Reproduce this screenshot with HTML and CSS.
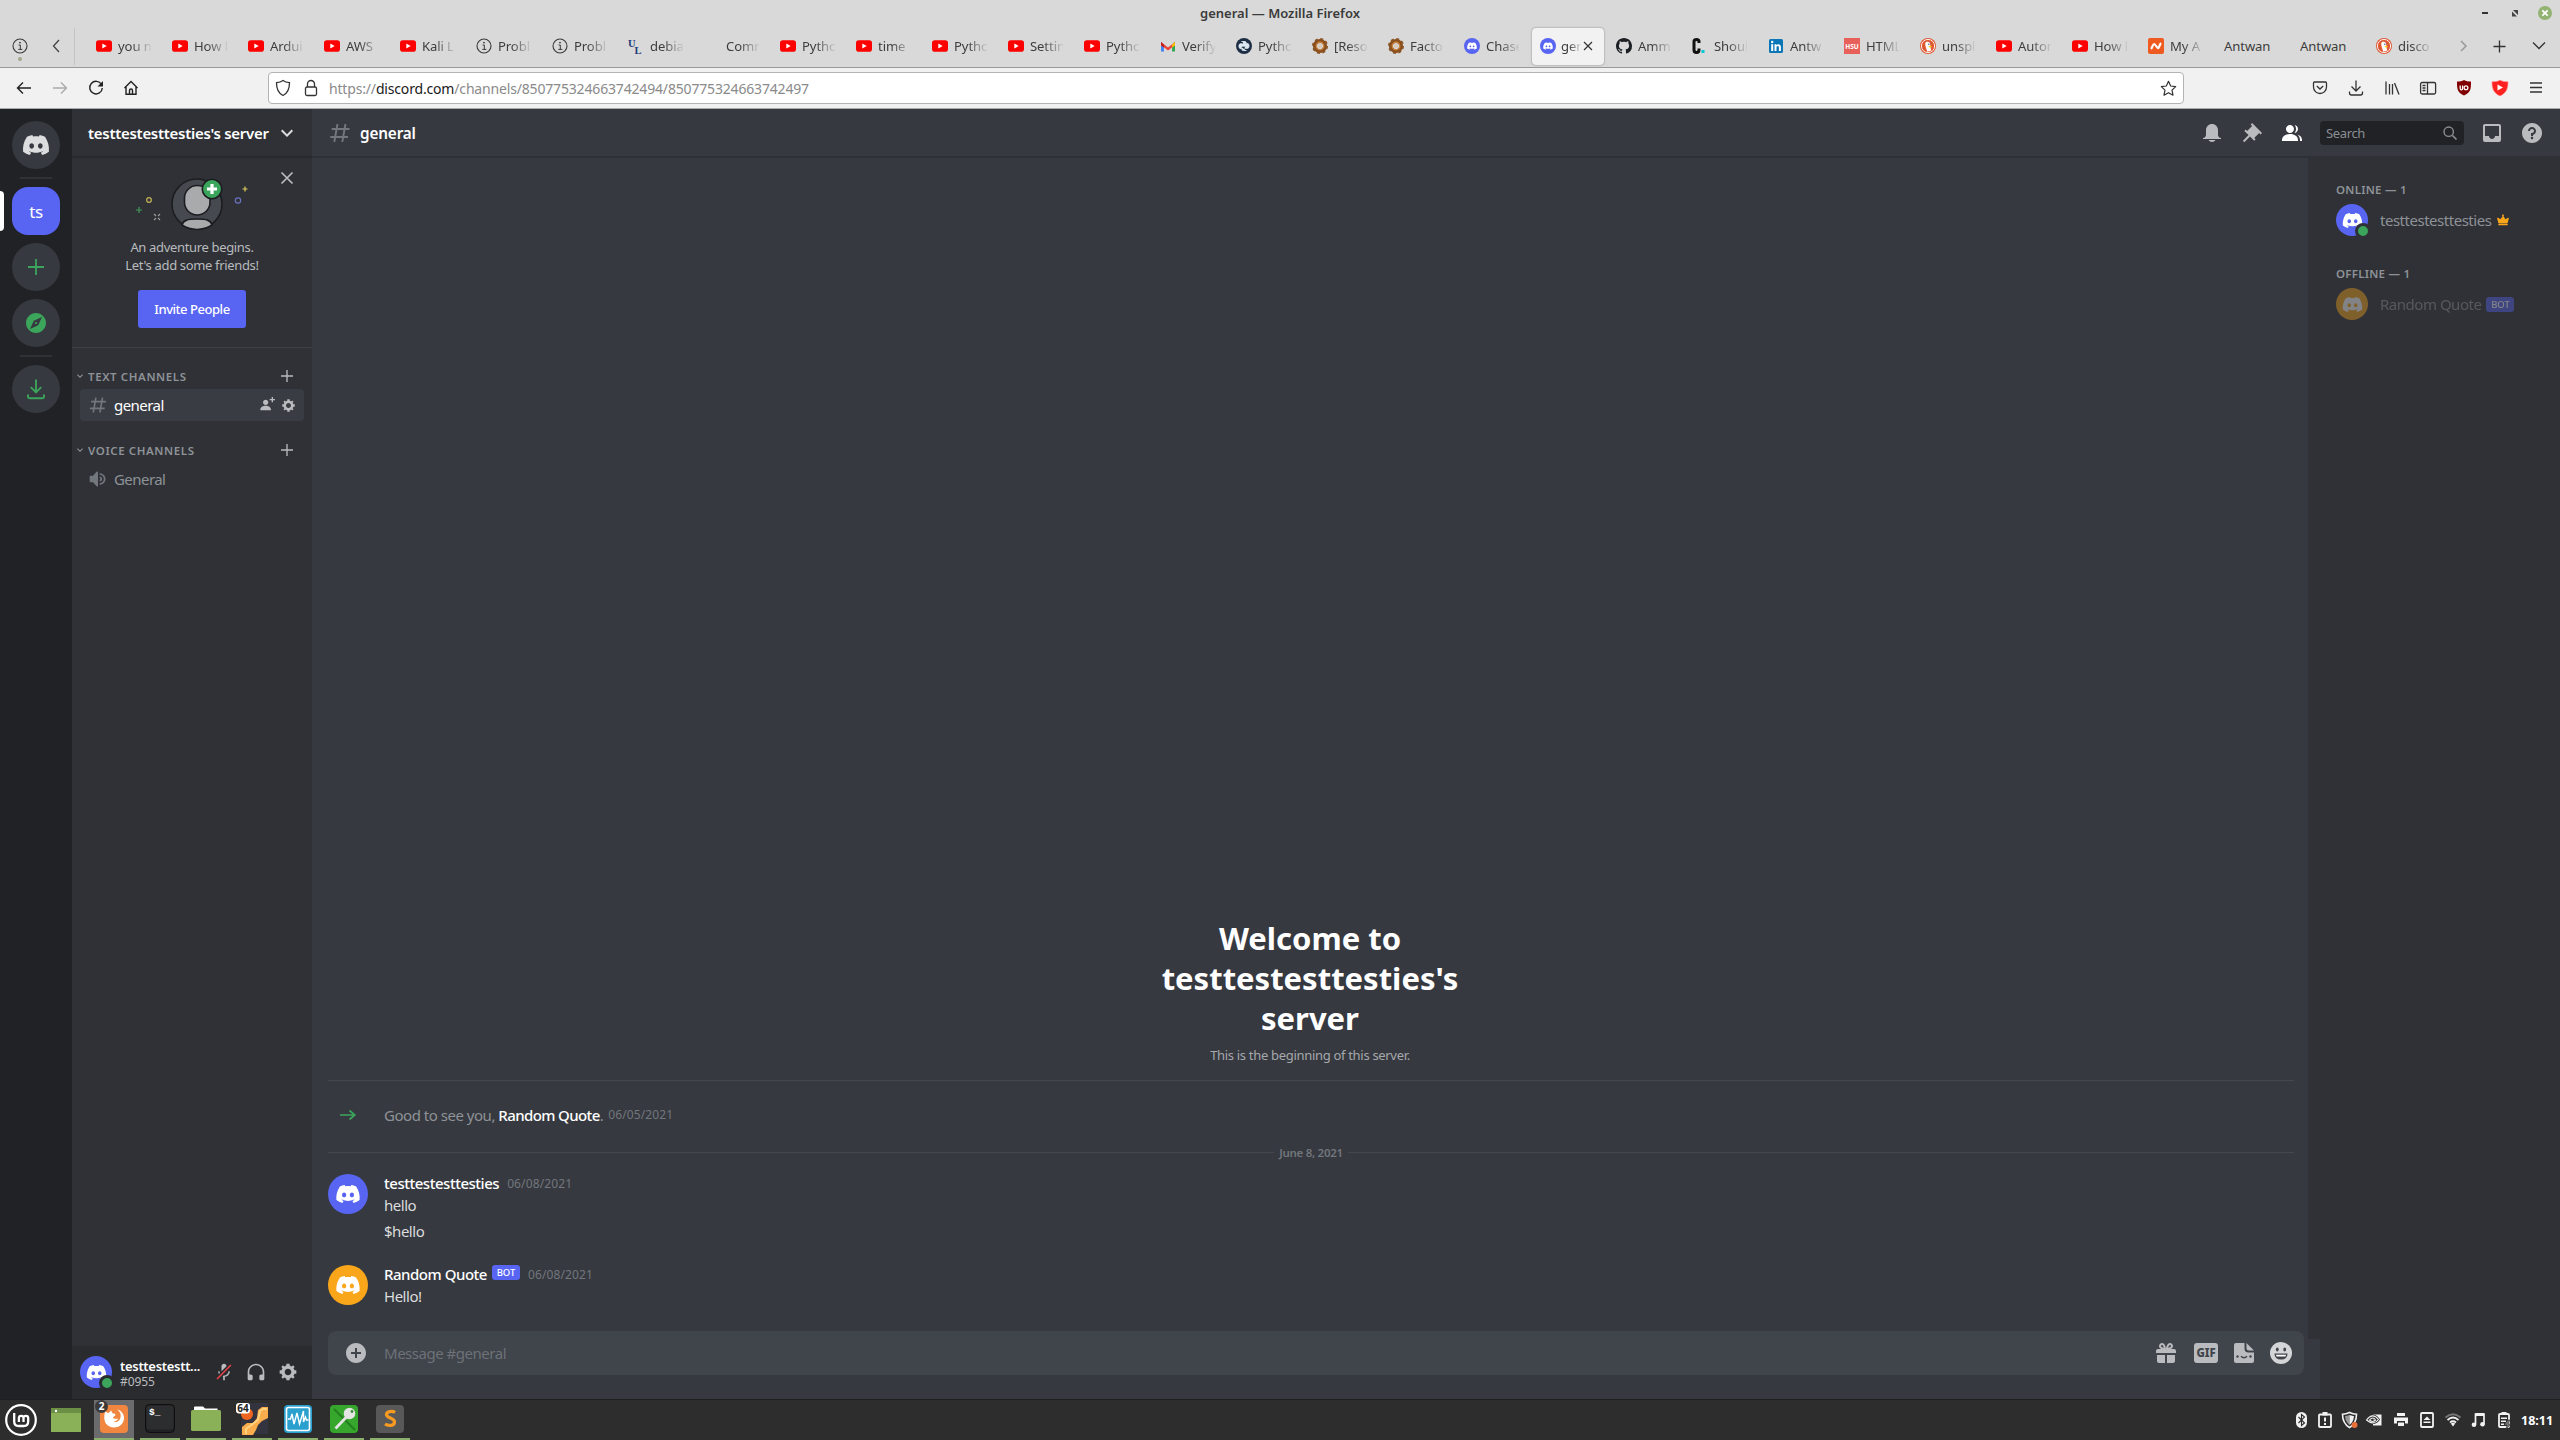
FILE: index.html
```html
<!DOCTYPE html>
<html lang="en">
<head>
<meta charset="utf-8">
<title>general</title>
<link rel="stylesheet" href="styles.css">
</head>
<body>
<svg class="sprite" aria-hidden="true">
  <symbol id="yt" viewBox="0 0 16 16"><rect y="2.3" width="16" height="11.4" rx="2.8" fill="#f00"/><path d="M6.3 5.5v5l4.4-2.5z" fill="#fff"/></symbol>
  <symbol id="info" viewBox="0 0 16 16"><circle cx="8" cy="8" r="7" fill="none" stroke="#3a3a3a" stroke-width="1.1"/><path d="M6.6 7H8.3v4.3M6.3 11.4h4" fill="none" stroke="#3a3a3a"/><circle cx="8" cy="4.6" r=".9" fill="#3a3a3a"/></symbol>
  <symbol id="disc" viewBox="0 0 28 20"><path fill="currentColor" fill-rule="evenodd" d="M23.0212 1.67671C21.3107 0.879656 19.5079 0.318797 17.6584 0C17.4062 0.461742 17.1749 0.934541 16.9708 1.4184C15.003 1.12145 12.9974 1.12145 11.0283 1.4184C10.819 0.934541 10.589 0.461744 10.3368 0.00546311C8.48074 0.324393 6.67795 0.885118 4.96746 1.68231C1.56727 6.77853 0.649666 11.7538 1.11108 16.652C3.10102 18.1418 5.3262 19.2743 7.69177 20C8.22338 19.2743 8.69519 18.4993 9.09812 17.691C8.32996 17.3997 7.58522 17.0424 6.87684 16.6135C7.06531 16.4762 7.24726 16.3387 7.42403 16.1847C11.5911 18.1749 16.408 18.1749 20.5763 16.1847C20.7531 16.3332 20.9351 16.4762 21.1171 16.6135C20.41 17.0369 19.6639 17.3997 18.897 17.691C19.3052 18.4993 19.7718 19.2689 20.3021 19.9945C22.6677 19.2689 24.8929 18.1364 26.8828 16.652V16.6465C27.4291 10.9619 25.9476 6.03128 23.0212 1.67671ZM9.68041 13.6383C8.39754 13.6383 7.34085 12.4453 7.34085 10.994C7.34085 9.54272 8.37155 8.34973 9.68041 8.34973C10.9893 8.34973 12.0395 9.54272 12.0187 10.994C12.0187 12.4453 10.9828 13.6383 9.68041 13.6383ZM18.3161 13.6383C17.0332 13.6383 15.9765 12.4453 15.9765 10.994C15.9765 9.54272 17.0072 8.34973 18.3161 8.34973C19.6249 8.34973 20.6751 9.54272 20.6543 10.994C20.6543 12.4453 19.6184 13.6383 18.3161 13.6383Z"/></symbol>
  <symbol id="discfav" viewBox="0 0 16 16"><circle cx="8" cy="8" r="8" fill="#5865f2"/><svg x="2.8" y="4.3" width="10.4" height="7.4" viewBox="0 0 28 20" color="#fff"><use href="#disc"/></svg></symbol>
  <symbol id="factorio" viewBox="0 0 16 16"><circle cx="8" cy="8" r="5.1" fill="none" stroke="#8a4f1c" stroke-width="4"/><circle cx="8" cy="8" r="7.1" fill="none" stroke="#8a5526" stroke-width="1.8" stroke-dasharray="3 2.58"/><circle cx="8" cy="8" r="3.8" fill="none" stroke="#d08a42" stroke-width="1.2"/><circle cx="8" cy="8" r="2" fill="#d9c9b5"/></symbol>
  <symbol id="ddg" viewBox="0 0 16 16"><circle cx="8" cy="8" r="8" fill="#de5833"/><circle cx="8" cy="8" r="6.6" fill="none" stroke="#fff" stroke-width=".9"/><path d="M5.2 5.2C6 3.4 9 3.3 10 5.4c.5 1.2.2 2 .3 3l.9 4.2-3.8 1.2C6.5 11 5 8 5.2 5.2z" fill="#fff"/><path d="M8.5 8h3.2l-.4 1.3H8.800z" fill="#fdd20a"/><circle cx="8.9" cy="6.3" r=".7" fill="#2d4f8e"/></symbol>
  <symbol id="hash" viewBox="0 0 24 24"><path fill="currentColor" fill-rule="evenodd" d="M5.88657 21C5.57547 21 5.3399 20.7189 5.39427 20.4126L6.00001 17H2.59511C2.28449 17 2.04905 16.7198 2.10259 16.4138L2.27759 15.4138C2.31946 15.1746 2.52722 15 2.77011 15H6.35001L7.41001 9H4.00511C3.69449 9 3.45905 8.71977 3.51259 8.41381L3.68759 7.41381C3.72946 7.17456 3.93722 7 4.18011 7H7.76001L8.39677 3.41262C8.43914 3.17391 8.64664 3 8.88907 3H9.87344C10.1845 3 10.4201 3.28107 10.3657 3.58738L9.76001 7H15.76L16.3968 3.41262C16.4391 3.17391 16.6466 3 16.8891 3H17.8734C18.1845 3 18.4201 3.28107 18.3657 3.58738L17.76 7H21.1649C21.4755 7 21.711 7.28023 21.6574 7.58619L21.4824 8.58619C21.4406 8.82544 21.2328 9 20.9899 9H17.41L16.35 15H19.7549C20.0655 15 20.301 15.2802 20.2474 15.5862L20.0724 16.5862C20.0306 16.8254 19.8228 17 19.5799 17H16L15.3632 20.5874C15.3209 20.8261 15.1134 21 14.8709 21H13.8866C13.5755 21 13.3399 20.7189 13.3943 20.4126L14 17H8.00001L7.36325 20.5874C7.32088 20.8261 7.11337 21 6.87094 21H5.88657ZM9.41045 9L8.35045 15H14.3504L15.4104 9H9.41045Z"/></symbol>
  <symbol id="plus" viewBox="0 0 24 24"><path fill="currentColor" d="M20 11.1111H12.8889V4H11.1111V11.1111H4V12.8889H11.1111V20H12.8889V12.8889H20V11.1111Z"/></symbol>
  <symbol id="gear" viewBox="0 0 24 24"><path fill="currentColor" fill-rule="evenodd" d="M19.738 10H22V14H19.739C19.498 14.931 19.1 15.798 18.565 16.564L20 18L18 20L16.565 18.564C15.797 19.099 14.932 19.498 14 19.738V22H10V19.738C9.069 19.498 8.203 19.099 7.436 18.564L6 20L4 18L5.436 16.564C4.901 15.799 4.502 14.932 4.262 14H2V10H4.262C4.502 9.068 4.9 8.202 5.436 7.436L4 6L6 4L7.436 5.436C8.202 4.9 9.068 4.502 10 4.262V2H14V4.261C14.932 4.502 15.797 4.9 16.565 5.435L18 3.999L20 5.999L18.564 7.436C19.099 8.202 19.498 9.069 19.738 10ZM12 16C14.2091 16 16 14.2091 16 12C16 9.79086 14.2091 8 12 8C9.79086 8 8 9.79086 8 12C8 14.2091 9.79086 16 12 16Z"/></symbol>
  <symbol id="chev" viewBox="0 0 24 24"><path fill="currentColor" d="M16.59 8.59004L12 13.17L7.41 8.59004L6 10L12 16L18 10L16.59 8.59004Z"/></symbol>
</svg>

<header class="titlebar">
  <span class="window-title">general — Mozilla Firefox</span>
  <svg class="window-controls" width="76" height="16" viewBox="0 0 76 16"><path d="M2 8h6" stroke="#333" stroke-width="2"/><path d="M33 5h5v5zM32 6.500v5h5z" fill="#444"/><circle cx="65" cy="8" r="7" fill="#92b372"/><path d="m62.300 5.300 5.400 5.400m0-5.400-5.400 5.400" stroke="#fff" stroke-width="1.800"/></svg>
</header>

<nav class="tabs">
  <div class="tabs-pinned"><svg width="16" height="16"><use href="#info"/></svg><i></i></div>
  <svg class="tabs-prev" width="16" height="16" viewBox="0 0 16 16"><path d="M11 2 5.500 8l5.500 6" fill="none" stroke="#444" stroke-width="1.300"/></svg>
  <div class="tab-list">
    <div class="tab"><svg><use href="#yt"/></svg><span>you n</span></div>
    <div class="tab"><svg><use href="#yt"/></svg><span>How l</span></div>
    <div class="tab"><svg><use href="#yt"/></svg><span>Ardui</span></div>
    <div class="tab"><svg><use href="#yt"/></svg><span>AWS</span></div>
    <div class="tab"><svg><use href="#yt"/></svg><span>Kali L</span></div>
    <div class="tab"><svg><use href="#info"/></svg><span>Probl</span></div>
    <div class="tab"><svg><use href="#info"/></svg><span>Probl</span></div>
    <div class="tab"><svg viewBox="0 0 16 16"><text x="0" y="9" class="fav-serif">U</text><text x="6.500" y="15.500" class="fav-serif">L</text></svg><span>debia</span></div>
    <div class="tab"><svg></svg><span>Comm</span></div>
    <div class="tab"><svg><use href="#yt"/></svg><span>Pytho</span></div>
    <div class="tab"><svg><use href="#yt"/></svg><span>time</span></div>
    <div class="tab"><svg><use href="#yt"/></svg><span>Pytho</span></div>
    <div class="tab"><svg><use href="#yt"/></svg><span>Settin</span></div>
    <div class="tab"><svg><use href="#yt"/></svg><span>Pytho</span></div>
    <div class="tab"><svg viewBox="0 0 16 16"><path d="M1 3.500v10h3V7z" fill="#4285f4"/><path d="M15 3.500v10h-3V7z" fill="#34a853"/><path d="m1 4 7 5.500L15 4v3l-7 5.500L1 7z" fill="#ea4335"/><path d="M12 6.500 15 4v3.500l-3 2z" fill="#fbbc04"/><path d="M1 4l3 2.500v3l-3-2z" fill="#c5221f"/></svg><span>Verify</span></div>
    <div class="tab"><svg viewBox="0 0 16 16"><circle cx="8" cy="8" r="8" fill="#1e2f45"/><path d="M5.500 3.500h3.300q1.400 0 1.400 1.400v2.300q0 1-1 1H6.400q-1.200 0-1.200 1.500v.8H4.100C2.600 10.500 2.600 5.800 4.100 5.800h3.400M10.700 5.500h1.200c1.500 0 1.500 4.800 0 4.800H8.500M10.500 12.500H7.200q-1.400 0-1.400-1.400V9.600" fill="#dce9f2" stroke="#dce9f2" stroke-width=".9"/><circle cx="6.300" cy="4.700" r=".6" fill="#1e2f45"/><circle cx="9.600" cy="11.500" r=".6" fill="#1e2f45"/></svg><span>Pytho</span></div>
    <div class="tab"><svg><use href="#factorio"/></svg><span>[Reso</span></div>
    <div class="tab"><svg><use href="#factorio"/></svg><span>Facto</span></div>
    <div class="tab"><svg><use href="#discfav"/></svg><span>Chase</span></div>
    <div class="tab tab-active"><svg><use href="#discfav"/></svg><span>gen</span><svg class="tab-close" viewBox="0 0 16 16"><path d="m4 4 8 8m0-8-8 8" stroke="#333" stroke-width="1.200"/></svg></div>
    <div class="tab"><svg viewBox="0 0 16 16"><path fill="#1b1f23" d="M8 0C3.580 0 0 3.580 0 8c0 3.540 2.290 6.530 5.470 7.590.4.070.55-.17.55-.38 0-.19-.01-.82-.01-1.490-2.010.37-2.530-.49-2.690-.94-.09-.23-.48-.94-.82-1.130-.28-.15-.68-.52-.01-.53.63-.01 1.080.58 1.230.82.72 1.210 1.870.87 2.330.66.07-.52.28-.87.51-1.070-1.780-.2-3.640-.89-3.640-3.950 0-.87.31-1.590.82-2.150-.08-.2-.36-1.020.08-2.120 0 0 .67-.21 2.200.82.64-.18 1.320-.27 2-.27s1.360.09 2 .27c1.530-1.040 2.200-.82 2.200-.82.44 1.100.16 1.920.08 2.120.51.56.82 1.270.82 2.150 0 3.070-1.870 3.750-3.650 3.950.29.25.54.73.54 1.480 0 1.070-.01 1.930-.01 2.200 0 .21.15.46.55.38A8.010 8.010 0 0 0 16 8c0-4.420-3.580-8-8-8z"/></svg><span>Amm</span></div>
    <div class="tab"><svg viewBox="0 0 16 16"><path d="M7 5V3.500q0-2-2.500-2T2 3.500V12q0 2.500 2.500 2.500T7 12v-1.500" fill="none" stroke="#111" stroke-width="3"/><rect x="9.500" y="12" width="3" height="3" fill="#00c8d7"/></svg><span>Shoul</span></div>
    <div class="tab"><svg viewBox="0 0 16 16"><rect x="1" y="1" width="14" height="14" rx="1.500" fill="#0a76b5"/><path d="M3.200 6.200h2V13h-2zM6.500 6.200h2v1c1-1.700 4.400-1.500 4.400 1.800v4h-2V9.500c0-2-2.400-2-2.400 0V13h-2z" fill="#fff"/><circle cx="4.200" cy="4" r="1.200" fill="#fff"/></svg><span>Antw</span></div>
    <div class="tab"><svg viewBox="0 0 16 16"><rect width="16" height="16" fill="#e8605a"/><text x="8" y="10.500" class="fav-hsu">HSU</text></svg><span>HTML</span></div>
    <div class="tab"><svg><use href="#ddg"/></svg><span>unspl</span></div>
    <div class="tab"><svg><use href="#yt"/></svg><span>Auton</span></div>
    <div class="tab"><svg><use href="#yt"/></svg><span>How l</span></div>
    <div class="tab"><svg viewBox="0 0 16 16"><rect width="16" height="16" rx="2" fill="#ee5a20"/><path d="M3 11c1-1 2-5 3.200-5S9 10.200 10 10.200 12 6 13 5" fill="none" stroke="#fff" stroke-width="2.200"/></svg><span>My A</span></div>
    <div class="tab tab-text"><span>Antwan</span></div>
    <div class="tab tab-text"><span>Antwan</span></div>
    <div class="tab"><svg><use href="#ddg"/></svg><span>disco</span></div>
  </div>
  <svg class="tabs-tools" width="100" height="16" viewBox="0 0 100 16"><path d="m6 3 5 5-5 5" fill="none" stroke="#999" stroke-width="1.500"/><path d="M44 2v12m-6-6h12" stroke="#333" stroke-width="1.300" transform="translate(.5 .5)"/><path d="m78 4.500 6 6 6-6" fill="none" stroke="#333" stroke-width="1.300"/></svg>
</nav>

<div class="toolbar">
  <svg class="nav-buttons" width="128" height="16" viewBox="0 0 128 16" fill="none" stroke="#222" stroke-width="1.400">
    <path d="M15 8H1.500M7 2.500 1.500 8 7 13.500"/>
    <path d="M37 8h13.500M45 2.500 50.500 8 45 13.500" stroke="#aaa"/>
    <path d="M85.500 4.500A6.300 6.300 0 1 0 86.300 8"/><path d="M87 1v5.500h-5.500z" fill="#222" stroke="none"/>
    <path d="M108.500 8 115 1.500 121.500 8M110 7v7.300h10V7M113.500 14v-3.500q0-1.500 1.500-1.500t1.500 1.500V14"/>
  </svg>
  <div class="urlbar">
    <svg width="44" height="18" viewBox="0 0 44 18" fill="none" stroke="#333" stroke-width="1.300"><path d="M8 1.500c2 1.500 4 2 6.500 2.200C14.500 9 13 14 8 16.500 3 14 1.500 9 1.500 3.700 4 3.500 6 3 8 1.500z"/><rect x="30.500" y="8" width="11" height="8.500" rx="1.500"/><path d="M32.500 8V5a3.500 3.500 0 0 1 7 0v3"/></svg>
    <span class="url">https://<b>discord.com</b>/channels/850775324663742494/850775324663742497</span>
    <svg class="star" width="17" height="17" viewBox="0 0 17 17"><path d="m8.500 1.300 2.200 4.700 5 .6-3.700 3.500 1 5.100-4.500-2.500L4 15.200l1-5.100L1.300 6.600l5-.6z" fill="none" stroke="#333" stroke-width="1.200" stroke-linejoin="round"/></svg>
  </div>
  <svg class="nav-extras" width="232" height="16" viewBox="0 0 232 16" fill="none" stroke="#333" stroke-width="1.300">
    <path d="M2.500 2h11q1 0 1 1v4a6.500 6.500 0 0 1-13 0V3q0-1 1-1zM4.800 6 8 9l3.200-3"/>
    <path d="M44 .5V11M39.500 6.500 44 11l4.500-4.500M37.500 11.500v1.500q0 2 2 2h9q2 0 2-2v-1.500"/>
    <path d="M74 1.500v13M77.500 4v10.500M80.500 4v10.500M82.500 3l4.500 11.500"/>
    <rect x="108.600" y="2.500" width="15" height="11.500" rx="1.500"/><path d="M115.500 2.500V14M110.500 5.500h3M110.500 8h3M110.500 10.500h3"/>
    <path d="M152 0c2 1.200 4 1.500 7 1.500 0 7 0 11-7 14-7-3-7-7-7-14 3 0 5-.3 7-1.500z" fill="#800000" stroke="none"/><path d="M148.200 5.500v3q0 1.300 1.200 1.300t1.200-1.300v-3" stroke="#fff"/><circle cx="154" cy="7.700" r="1.900" stroke="#fff"/>
    <path d="M188 0c2 1.500 5 1.700 8 1.700 0 6-1 11-8 14.300-7-3.300-8-8.300-8-14.300 3 0 6-.2 8-1.700z" fill="#ff2020" stroke="#ff8a8a" stroke-width=".6"/><path d="M185.500 4.500v6l5.500-3z" fill="#fff" stroke="none"/>
    <path d="M218 3h12M218 7.500h12M218 12h12"/>
  </svg>
</div>

<div class="app">
  <nav class="guilds">
    <div class="guild guild-home"><svg width="28" height="20"><use href="#disc"/></svg></div>
    <hr>
    <div class="guild guild-current"><span>ts</span></div>
    <div class="guild"><svg width="20" height="20" viewBox="0 0 20 20"><path d="M10 2v16M2 10h16" stroke="currentColor" stroke-width="1.800"/></svg></div>
    <div class="guild"><svg width="24" height="24" viewBox="0 0 24 24"><path fill="currentColor" fill-rule="evenodd" d="M12 10.900C11.390 10.900 10.900 11.390 10.900 12C10.900 12.610 11.390 13.100 12 13.100C12.610 13.100 13.100 12.610 13.100 12C13.100 11.390 12.610 10.900 12 10.900ZM12 2C6.480 2 2 6.480 2 12C2 17.520 6.480 22 12 22C17.520 22 22 17.520 22 12C22 6.480 17.520 2 12 2ZM14.190 14.190L6 18L9.810 9.810L18 6L14.190 14.190Z"/></svg></div>
    <hr>
    <div class="guild"><svg width="24" height="24" viewBox="0 0 24 24"><path d="M12 2.500v12.500M6.800 10.200 12 15.400l5.200-5.200M4 17.500v2.200q0 1.500 1.500 1.500h13q1.500 0 1.500-1.500v-2.200" fill="none" stroke="currentColor" stroke-width="1.900"/></svg></div>
  </nav>

  <aside class="sidebar">
    <div class="server-header"><span>testtestesttesties's server</span><svg width="24" height="24"><use href="#chev"/></svg></div>
    <section class="invite">
      <svg class="invite-art" width="116" height="54" viewBox="0 0 116 54">
        <circle cx="63" cy="27" r="25" fill="#46494f" stroke="#1c1d20" stroke-width="1.600"/>
        <path d="M48 48c1-5 6-6 15-6s14 1 15 6q-7 4.500-15 4.500T48 48z" fill="#a9aaac" stroke="#1c1d20" stroke-width="1.600"/>
        <rect x="50.500" y="8.500" width="25.500" height="29.500" rx="12.700" fill="#a9aaac" stroke="#1c1d20" stroke-width="1.600"/>
        <circle cx="78" cy="12" r="9.700" fill="#3ba55c" stroke="#1c1d20" stroke-width="1.600"/>
        <path d="M78 7v10m-5-5h10" stroke="#fff" stroke-width="3.200"/>
        <g fill="none" stroke-width="1.200"><circle cx="15" cy="23" r="2.300" stroke="#c9b458"/><circle cx="104" cy="23.500" r="2.700" stroke="#6a70c0"/><path d="M5 30v6M2 33h6" stroke="#3f9a5a"/><path d="M111 9.500v5M108.500 12h5" stroke="#d9cf5a"/><path d="m20 37 2 2m2 2 2 2m0-6-2 2m-2 2-2 2" stroke="#999"/></g>
      </svg>
      <svg class="invite-close" width="14" height="14" viewBox="0 0 14 14"><path d="m1.500 1.500 11 11m0-11-11 11" stroke="currentColor" stroke-width="1.700"/></svg>
      <p>An adventure begins.<br>Let's add some friends!</p>
      <button>Invite People</button>
    </section>
    <div class="category"><svg width="12" height="12"><use href="#chev"/></svg><span>TEXT CHANNELS</span><svg class="add" width="18" height="18"><use href="#plus"/></svg></div>
    <div class="channel channel-current"><svg width="20" height="20"><use href="#hash"/></svg><span>general</span><svg class="act" width="16" height="16" viewBox="0 0 24 24"><path fill="currentColor" d="M21 3H24V5H21V8H19V5H16V3H19V0H21V3ZM10 12C12.205 12 14 10.205 14 8C14 5.795 12.205 4 10 4C7.795 4 6 5.795 6 8C6 10.205 7.795 12 10 12ZM10 13C5.289 13 2 15.467 2 19V20H18V19C18 15.467 14.711 13 10 13Z"/></svg><svg class="act" width="15" height="15"><use href="#gear"/></svg></div>
    <div class="category category-voice"><svg width="12" height="12"><use href="#chev"/></svg><span>VOICE CHANNELS</span><svg class="add" width="18" height="18"><use href="#plus"/></svg></div>
    <div class="channel"><svg width="20" height="20" viewBox="0 0 24 24"><path fill="currentColor" fill-rule="evenodd" d="M11.383 3.079C11.009 2.925 10.579 3.010 10.293 3.296L6 8.002H3C2.450 8.002 2 8.453 2 9.002V15.002C2 15.552 2.450 16.002 3 16.002H6L10.293 20.710C10.579 20.996 11.009 21.082 11.383 20.927C11.757 20.772 12 20.407 12 20.002V4.002C12 3.599 11.757 3.232 11.383 3.079ZM14 5.002V7.002C16.757 7.002 19 9.246 19 12.002C19 14.759 16.757 17.002 14 17.002V19.002C17.860 19.002 21 15.863 21 12.002C21 8.143 17.860 5.002 14 5.002ZM14 9.002C15.654 9.002 17 10.349 17 12.002C17 13.657 15.654 15.002 14 15.002V13.002C14.551 13.002 15 12.553 15 12.002C15 11.451 14.551 11.002 14 11.002V9.002Z"/></svg><span>General</span></div>
    <footer class="user">
      <div class="avatar avatar-32"><svg width="21" height="15"><use href="#disc"/></svg><i class="status"></i></div>
      <div class="user-name"><strong>testtestestt...</strong><span>#0955</span></div>
      <svg width="20" height="20" viewBox="0 0 24 24"><path fill="currentColor" d="M6.700 11H5C5 12.190 5.340 13.300 5.900 14.280L7.130 13.050C6.860 12.430 6.700 11.740 6.700 11ZM9.010 11.085C9.015 11.112 9.020 11.140 9.020 11.170L15 5.180V5C15 3.340 13.660 2 12 2C10.340 2 9 3.340 9 5V11C9 11.030 9.005 11.057 9.010 11.085ZM11.724 16.093L10.963 16.853L10.253 17.569C10.498 17.633 10.747 17.684 11 17.720V22H13V17.720C16.280 17.230 19 14.410 19 11H17.300C17.300 14 14.760 16.100 12 16.100Z"/><path fill="#ed4245" d="M21 4.270L19.730 3L3 19.730L4.270 21L8.460 16.820L9.690 15.580L11.350 13.920L14.990 10.280L21 4.270Z"/></svg>
      <svg width="20" height="20" viewBox="0 0 24 24"><path fill="currentColor" d="M12 2.003C6.486 2.003 2 6.488 2 12.003V20.003C2 21.107 2.895 22.003 4 22.003H6C7.104 22.003 8 21.107 8 20.003V17.003C8 15.899 7.104 15.003 6 15.003H4V12.003C4 7.591 7.589 4.003 12 4.003C16.411 4.003 20 7.591 20 12.003V15.003H18C16.896 15.003 16 15.899 16 17.003V20.003C16 21.107 16.896 22.003 18 22.003H20C21.104 22.003 22 21.107 22 20.003V12.003C22 6.488 17.514 2.003 12 2.003Z"/></svg>
      <svg width="20" height="20"><use href="#gear"/></svg>
    </footer>
  </aside>

  <div class="main">
    <header class="chat-header">
      <svg class="hash" width="24" height="24"><use href="#hash"/></svg>
      <h1>general</h1>
      <svg width="24" height="24" viewBox="0 0 24 24"><path fill="currentColor" d="M18 9V14C18 15.657 19.344 17 21 17V18H3V17C4.656 17 6 15.657 6 14V9C6 5.686 8.686 3 12 3C15.314 3 18 5.686 18 9ZM12 21C10.524 21 9.248 20.190 8.555 19H15.445C14.752 20.190 13.476 21 12 21Z"/></svg>
      <svg width="24" height="24" viewBox="0 0 24 24"><path fill="currentColor" d="M22 12L12.101 2.101L10.686 3.514L12.101 4.929L7.151 9.878V9.880L5.736 8.465L4.322 9.880L8.565 14.122L2.908 19.778L4.322 21.192L9.979 15.536L14.222 19.778L15.636 18.364L14.222 16.950L19.171 12H19.172L20.586 13.414L22 12Z"/></svg>
      <svg class="on" width="24" height="24" viewBox="0 0 24 24"><path fill="currentColor" d="M14 8.006C14 10.211 12.206 12.006 10 12.006C7.795 12.006 6 10.211 6 8.006C6 5.801 7.794 4.006 10 4.006C12.206 4.006 14 5.801 14 8.006ZM2 19.006C2 15.473 5.290 13.006 10 13.006C14.711 13.006 18 15.473 18 19.006V20.006H2V19.006ZM20 20.006H22V19.006C22 16.443 20.270 14.441 17.521 13.535C19.062 14.913 20 16.806 20 19.006V20.006ZM14.883 11.908C16.666 11.504 18 9.908 18 8.006C18 5.969 16.469 4.282 14.497 4.037C15.432 5.095 16 6.485 16 8.006C16 9.449 15.489 10.774 14.638 11.810Z"/></svg>
      <div class="search"><span>Search</span><svg width="16" height="16" viewBox="0 0 16 16"><path d="m10.500 10.500 4 4" stroke="currentColor" stroke-width="1.700"/><circle cx="6.700" cy="6.700" r="4.700" fill="none" stroke="currentColor" stroke-width="1.400"/></svg></div>
      <svg width="24" height="24" viewBox="0 0 24 24"><path fill="currentColor" fill-rule="evenodd" d="M19 3H4.990C3.880 3 3.010 3.890 3.010 5L3 19C3 20.100 3.880 21 4.990 21H19C20.100 21 21 20.100 21 19V5C21 3.890 20.100 3 19 3ZM19 15H15C15 16.660 13.650 18 12 18C10.350 18 9 16.660 9 15H4.990V5H19V15Z"/></svg>
      <svg width="24" height="24" viewBox="0 0 24 24"><path fill="currentColor" fill-rule="evenodd" d="M12 2C6.486 2 2 6.487 2 12C2 17.515 6.486 22 12 22C17.514 22 22 17.515 22 12C22 6.487 17.514 2 12 2ZM12 18.250C11.310 18.250 10.750 17.691 10.750 17C10.750 16.310 11.310 15.750 12 15.750C12.690 15.750 13.250 16.310 13.250 17C13.250 17.691 12.690 18.250 12 18.250ZM13 13.875V15H11V12H12C13.104 12 14 11.103 14 10C14 8.896 13.104 8 12 8C10.896 8 10 8.896 10 10H8C8 7.795 9.795 6 12 6C14.205 6 16 7.795 16 10C16 11.861 14.723 13.429 13 13.875Z"/></svg>
    </header>
    <div class="content">
      <main class="chat">
        <div class="messages">
          <div class="welcome">
            <h2>Welcome to<br>testtestesttesties's<br>server</h2>
            <p>This is the beginning of this server.</p>
          </div>
          <div class="join"><svg width="18" height="18" viewBox="0 0 18 18"><path d="M1 9h15M10.500 4.500 15.800 9l-5.300 4.500" fill="none" stroke="#3ba55c" stroke-width="1.700"/></svg><span>Good to see you, <b>Random Quote</b>.</span><time>06/05/2021</time></div>
          <div class="day"><span>June 8, 2021</span></div>
          <div class="message">
            <div class="avatar"><svg width="26" height="18"><use href="#disc"/></svg></div>
            <div class="message-body"><h3><span>testtestesttesties</span><time>06/08/2021</time></h3><p>hello</p><p class="next">$hello</p></div>
          </div>
          <div class="message">
            <div class="avatar avatar-orange"><svg width="26" height="18"><use href="#disc"/></svg></div>
            <div class="message-body"><h3><span>Random Quote</span><em class="bot">BOT</em><time>06/08/2021</time></h3><p>Hello!</p></div>
          </div>
        </div>
        <div class="composer">
          <svg width="24" height="24" viewBox="0 0 24 24"><path fill="currentColor" fill-rule="evenodd" d="M12 2.001C6.486 2.001 2 6.487 2 12.001C2 17.515 6.486 22.001 12 22.001C17.514 22.001 22 17.515 22 12.001C22 6.487 17.514 2.001 12 2.001ZM17 13.001H13V17.001H11V13.001H7V11.001H11V7.001H13V11.001H17V13.001Z"/></svg>
          <span class="placeholder">Message #general</span>
          <svg width="24" height="24" viewBox="0 0 24 24"><path fill="currentColor" fill-rule="evenodd" d="M16.886 7.999H20C21.104 7.999 22 8.896 22 9.999V11.999H2V9.999C2 8.896 2.897 7.999 4 7.999H7.114C6.663 7.764 6.236 7.477 5.879 7.121C4.709 5.951 4.709 4.048 5.879 2.879C7.012 1.746 8.986 1.746 10.121 2.877C11.758 4.514 11.979 7.595 11.998 7.941L11.990 7.999H12.010L12.002 7.941C12.022 7.594 12.242 4.515 13.879 2.878C15.014 1.745 16.986 1.746 18.121 2.877C19.290 4.049 19.290 5.952 18.121 7.121C17.764 7.477 17.337 7.764 16.886 7.999ZM7.293 5.707C6.903 5.316 6.903 4.682 7.293 4.292C7.481 4.103 7.732 4 8 4C8.268 4 8.519 4.103 8.707 4.292C9.297 4.882 9.641 5.940 9.825 6.822C8.945 6.639 7.879 6.293 7.293 5.707ZM14.174 6.824C14.359 5.941 14.702 4.883 15.293 4.293C15.481 4.103 15.732 4 16 4C16.268 4 16.519 4.103 16.706 4.291C17.096 4.682 17.097 5.316 16.707 5.707C16.116 6.298 15.057 6.642 14.174 6.824ZM3 13.999V19.999C3 21.102 3.897 21.999 5 21.999H11V13.999H3ZM13 13.999V21.999H19C20.104 21.999 21 21.102 21 19.999V13.999H13Z"/></svg>
          <em class="gif">GIF</em>
          <svg class="sticker" width="20" height="20" viewBox="0 0 20 20"><path fill="currentColor" d="M2 0h8.500v5.500q0 4 4 4H20V18q0 2-2 2H2q-2 0-2-2V2q0-2 2-2zM12.500 0 20 7.500h-5q-2.500 0-2.500-2.500z"/><path d="M7 13.200q3 3 6 0" fill="none" stroke="#40444b" stroke-width="1.600"/><circle cx="3.500" cy="13.500" r="1.200" fill="#40444b"/><circle cx="16.500" cy="13.500" r="1.200" fill="#40444b"/></svg>
          <svg class="emoji" width="22" height="22" viewBox="0 0 22 22"><circle cx="11" cy="11" r="11" fill="#d4d5d7"/><ellipse cx="7.300" cy="7.500" rx="1.400" ry="2" fill="#40444b"/><ellipse cx="14.700" cy="7.500" rx="1.400" ry="2" fill="#40444b"/><path d="M4.500 11.500h13q0 6-6.500 6t-6.500-6z" fill="#40444b"/><path d="M6 12.800h10l-.5 1.700h-9z" fill="#fff"/></svg>
        </div>
      </main>
      <aside class="members">
        <h4>ONLINE — 1</h4>
        <div class="member"><div class="avatar avatar-32"><svg width="21" height="15"><use href="#disc"/></svg><i class="status"></i></div><span>testtestesttesties</span><svg class="crown" width="14" height="14" viewBox="0 0 16 16"><path fill="#faa61a" d="M13.657 5.429C13.888 5.290 14.181 5.304 14.397 5.465C14.613 5.626 14.712 5.901 14.647 6.162L13.314 11.495C13.239 11.793 12.973 12.001 12.667 12.001H3.333C3.027 12.001 2.761 11.792 2.686 11.495L1.353 6.162C1.288 5.901 1.387 5.626 1.603 5.465C1.820 5.305 2.112 5.291 2.343 5.429L5.132 7.102L7.446 3.631L7.545 3.545L6.903 2.903C6.773 2.773 6.773 2.561 6.903 2.431L7.765 1.569C7.894 1.440 8.107 1.440 8.236 1.569L9.098 2.431C9.227 2.561 9.227 2.773 9.098 2.903L8.456 3.545L8.555 3.631L10.869 7.102L13.657 5.429ZM2.667 12.667H13.333V14.001H2.667V12.667Z"/></svg></div>
        <h4>OFFLINE — 1</h4>
        <div class="member member-offline"><div class="avatar avatar-32 avatar-orange"><svg width="21" height="15"><use href="#disc"/></svg></div><span>Random Quote</span><em class="bot">BOT</em></div>
      </aside>
    </div>
  </div>
</div>

<footer class="panel">
  <svg class="launcher" width="32" height="32" viewBox="0 0 32 32" fill="none" stroke="#fff"><circle cx="16" cy="16" r="14.800" stroke-width="2.200"/><path d="M9.200 9v8.500q0 4.500 4.500 4.500h5q4.500 0 4.500-4.500V14q0-2.200-2.300-2.200T18.500 14v4M18.500 14q0-2.200-2.300-2.200T13.900 14v4" stroke-width="2.300"/></svg>
  <svg class="launcher" width="30" height="24" viewBox="0 0 30 24"><rect width="30" height="24" fill="#8bb158"/><rect width="30" height="5" fill="#6b8f45"/><circle cx="5" cy="3" r="1.200" fill="#fff"/></svg>
  <div class="task task-focus"><svg width="40" height="38" viewBox="0 0 40 38"><rect x="6" y="5" width="28" height="28" rx="4" fill="#f0863f"/><path d="M11.500 11c1 1.500 1.800 2 3 2 1-1 1.500-1.800 3-2.500 0 1.500.3 2 1.500 3 1.500 0 2.500.3 2.500 1.300-.5 1.500-2 1.500-2.500 3 1.500 1.800 4 .5 5 1 .3 1-2 2.700-4.500 2.700 3.500 1.800 8-1.200 7-7.500-.5-2-2-3.500-3.500-4.500 5 1 7.500 5.500 7 9.500-.6 5-5 8.500-10 8.500-5.500 0-9.700-4-9.700-9.500 0-3 .2-5 1.200-7z" fill="#fff"/><circle cx="7.500" cy="6.500" r="6.500" fill="#3a3a3a"/><text x="7.500" y="10" class="badge badge-light">2</text></svg></div>
  <div class="task"><svg width="40" height="38" viewBox="0 0 40 38"><rect x="5.500" y="4.500" width="29" height="28" rx="4" fill="#202123" stroke="#0e0e0f"/><rect x="6.500" y="5.500" width="27" height="24" rx="3" fill="#2c2d2f"/><text x="9" y="15" class="prompt">$_</text></svg></div>
  <div class="task"><svg width="40" height="38" viewBox="0 0 40 38"><path d="M8 10V7.500Q8 6.500 9 6.500h8l2 2h12.500v4z" fill="#fff"/><rect x="5" y="10" width="30" height="21" rx="1.500" fill="#8bb158"/></svg></div>
  <div class="task"><svg width="40" height="38" viewBox="0 0 40 38"><rect x="9" y="3" width="27" height="31" fill="#33343f"/><path d="M10 35v-8l5-4h6l4-5 1-8 4-3h6v11l-6 3-4 4-2 5-3 5z" fill="#f9ad4c"/><path d="M14 34v-5l4-3 8-6 2-9 3-2h4" fill="none" stroke="#ffd27f" stroke-width="2"/><circle cx="15" cy="14" r="6" fill="#ef6420"/><rect x="4" y="3" width="14" height="10.500" rx="3" fill="#fff"/><text x="11" y="11.500" class="badge">64</text></svg></div>
  <div class="task"><svg width="40" height="38" viewBox="0 0 40 38"><rect x="6" y="5" width="28" height="28" rx="4" fill="#2ba0cf"/><rect x="8.500" y="7.500" width="23" height="23" rx="2" fill="none" stroke="#fff" stroke-width="1.600"/><path d="M10 19h2.500l1.500-5 2 10 3-11 2.500 11 4-13v11l2-5 1 3h2" fill="none" stroke="#fff" stroke-width="1.400"/></svg></div>
  <div class="task"><svg width="40" height="38" viewBox="0 0 40 38"><rect x="6" y="5" width="28" height="28" rx="4" fill="#36a62c"/><path d="M10 9 31 30" stroke="#24801f" stroke-width="2"/><path d="m11.500 28.500 11-11.500" stroke="#e4e4e4" stroke-width="2.800"/><circle cx="25.500" cy="13.500" r="5.800" fill="#e4e4e4"/><circle cx="28" cy="11.500" r="1.400" fill="#3a8a33"/></svg></div>
  <div class="task"><svg width="40" height="38" viewBox="0 0 40 38"><rect x="6" y="5" width="28" height="28" rx="4" fill="#585858"/><path d="M25 12.500c-2-1.500-8.500-1.700-8.500 2 0 4 8 3.200 8 7.500 0 4.300-6.500 4-9.500 2" fill="none" stroke="#f79a22" stroke-width="3.200"/></svg></div>
  <svg class="tray" width="218" height="18" viewBox="0 0 218 18" fill="none" stroke="#f2f2f2">
    <rect x="2" y="1" width="11" height="16" rx="5.500" fill="#f2f2f2" stroke="none"/><path d="m4.500 6 6 6-3 2.500v-11l3 2.500-6 6" stroke="#2d2d2d" stroke-width="1.100"/>
    <rect x="25" y="3.500" width="12" height="12.500" rx="1" stroke-width="1.800"/><rect x="28.500" y="1" width="5" height="3.500" fill="#f2f2f2" stroke="none"/><path d="M31 6.500v4M31 12v2" stroke-width="2"/>
    <path d="M55.500 1.500q3.500 1.700 7 1.700 0 9-7 13.300-7-4.300-7-13.300 3.500 0 7-1.700z" stroke-width="1.600"/><path d="M55.500 4v10q-4-3-4.500-8.800z" fill="#999" stroke="none"/><path d="M55.500 4v10q4-3 4.500-8.800z" fill="#f2f2f2" stroke="none"/><circle cx="60.500" cy="14" r="3" fill="#e8703a" stroke="none"/>
    <path d="M79 3.500h8.500v11H79z" fill="#f2f2f2" stroke="none"/><path d="M72.500 9q6-8 12-.5-5 6.500-12 .5zM75.500 9q3.500-4 6 0-3 3-6 0z" stroke="#2d2d2d" stroke-width="2.500"/><path d="M72.500 9q6-8 12-.5-5 6.500-12 .5zM75.500 9q3.500-4 6 0-3 3-6 0z" stroke-width="1.100"/>
    <path d="M103 2h8v3h-8zM100 6.500h14v6h-3v-2.500h-8v2.500h-3zM104 11.500h6V15h-6z" fill="#f2f2f2" stroke="none"/>
    <rect x="127" y="2" width="12" height="14" rx="1" stroke-width="1.800"/><path d="m129.500 9 3.500-3.500L136.500 9zM129.500 10.500h7v1.500h-7z" fill="#f2f2f2" stroke="none"/>
    <path d="M151.500 6.500q7.500-6.500 15 0" stroke="#777" stroke-width="1.800"/><path d="M153.500 9q5.500-5 11 0M156 11.500q3-2.500 6 0" stroke-width="1.700"/><path d="m156.800 12.500 2.200 3 2.200-3q-2.200-1.500-4.400 0z" fill="#f2f2f2" stroke="none"/>
    <path d="M181.500 13.500V3h8.500v10" stroke-width="1.700"/><path d="M181.500 3.500h8.500" stroke-width="3"/><circle cx="180" cy="13.700" r="2.300" fill="#f2f2f2" stroke="none"/><circle cx="188.500" cy="13.200" r="2.300" fill="#f2f2f2" stroke="none"/>
    <rect x="205" y="3" width="10" height="13" rx="1" stroke-width="1.800"/><path d="M207.500 1h5v2h-5zM207 6.500h6v1.600h-6zM207 9.500h5v1.600h-5zM207 12.500h3v1.600h-3z" fill="#f2f2f2" stroke="none"/><path d="m214 9-4 5h3l-1 4 5-5h-3l2-4z" fill="#777" stroke="#2d2d2d" stroke-width=".6"/>
  </svg>
  <span class="clock">18:11</span>
</footer>
</body>
</html>
```
FILE: styles.css
```css
* { box-sizing: border-box; }
body {
  margin: 0; width: 2560px; height: 1440px; overflow: hidden;
  display: flex; flex-direction: column;
  font-family: "Noto Sans", "Open Sans", sans-serif; font-size: 15px; color: #dcddde; background: #36393f;
}
svg { display: block; flex: none; }
h1, h2, h3, h4, p { margin: 0; font-weight: 400; }
em { font-style: normal; }
.sprite { position: absolute; width: 0; height: 0; }

/* browser window */
.titlebar { height: 25px; background: #d9d9d9; display: grid; grid-template-columns: 1fr auto 1fr; align-items: center; color: #3b3b3b; }
.window-title { grid-column: 2; font-size: 13px; font-weight: 600; line-height: 25px; padding-top: 1px; }
.window-controls { justify-self: end; margin-right: 4px; }

.tabs { height: 43px; background: #d9d9d9; border-bottom: 1px solid #999; display: flex; align-items: center; color: #3d3d3d; font-size: 13.1px; }
.tabs-pinned { width: 40px; display: flex; justify-content: center; position: relative; }
.tabs-pinned i { position: absolute; top: 19px; left: 18px; width: 4px; height: 4px; border-radius: 50%; background: #a3a78c; }
.tabs-prev { margin: 0 10px 0 8px; }
.tab-list { display: flex; height: 37px; margin: 0 11px 0 0; padding-left: 13px; border-left: 1px solid #c4c4c4; }
.tab { width: 76px; height: 37px; padding: 0 13px 0 8px; display: flex; align-items: center; gap: 6px; }
.tab > svg { width: 16px; height: 16px; }
.tab span { flex: 1; min-width: 0; overflow: hidden; white-space: nowrap; line-height: 20px; letter-spacing: -.1px; mask-image: linear-gradient(to right, #000 40%, transparent 105%); }
.tab-text { padding-right: 4px; }
.tab-text span { mask-image: none; }
.tab-active { width: 72px; margin-right: 4px; padding-right: 8px; gap: 5px; background: #f2f2f2; border-radius: 4px; box-shadow: 0 0 2px #777; }
.tab-active .tab-close { margin-left: -6px; }
.fav-serif { font: bold 10.5px "Liberation Serif", serif; fill: #1d3a78; }
.fav-hsu { font: bold 6.5px "Noto Sans", sans-serif; fill: #fff; text-anchor: middle; }

.toolbar { height: 41px; background: #f1f1f1; border-bottom: 1px solid #ababab; display: flex; align-items: center; }
.nav-buttons { margin: 0 124px 0 16px; }
.urlbar { width: 1916px; height: 32px; background: #fff; border: 1px solid #b3b3b3; border-radius: 4px; display: flex; align-items: center; padding: 0 6px; }
.url { margin-left: 10px; flex: 1; color: #8a8a8a; font-size: 14px; letter-spacing: -.17px; white-space: nowrap; }
.url b { font-weight: 400; color: #1a1a1a; }
.nav-extras { margin-left: 128px; }

/* discord */
.app { height: 1290px; display: flex; color: #b9bbbe; letter-spacing: -.48px; }
.guilds { width: 72px; padding-top: 12px; background: #202225; display: flex; flex-direction: column; align-items: center; }
.guilds hr { width: 32px; height: 2px; margin: 0 0 8px; border: 0; background: #2f3136; }
.guild { width: 48px; height: 48px; margin-bottom: 8px; border-radius: 50%; background: #36393f; color: #3ba55c; display: flex; align-items: center; justify-content: center; }
.guild-home { color: #dcddde; }
.guild-current { position: relative; border-radius: 16px; background: #5865f2; color: #fff; font-size: 17px; letter-spacing: -.3px; }
.guild-current::before { content: ""; position: absolute; left: -16px; top: 4px; width: 8px; height: 40px; border-radius: 4px; background: #fff; }

.sidebar { width: 240px; background: #2f3136; display: flex; flex-direction: column; color: #8e9297; }
.server-header { height: 49px; padding: 0 13px 0 16px; display: flex; align-items: center; justify-content: space-between; border-bottom: 2px solid #27292d; color: #fff; font-weight: 600; letter-spacing: -.29px; white-space: nowrap; }
.server-header svg { color: #dcddde; }
.invite { height: 190px; position: relative; border-bottom: 1px solid #3d4046; display: flex; flex-direction: column; align-items: center; text-align: center; color: #b9bbbe; }
.invite-art { margin-top: 19px; }
.invite-close { position: absolute; top: 13px; right: 18px; }
.invite p { margin-top: 7px; font-size: 13px; letter-spacing: -.34px; line-height: 18px; }
.invite button { width: 108px; height: 38px; margin-top: 16px; padding: 0; border: 0; border-radius: 3px; background: #5865f2; color: #fff; font: 500 13px "Noto Sans", sans-serif; letter-spacing: -.46px; }
.category { height: 24px; margin: 16px 0 1px; padding: 0 16px 0 2px; display: flex; align-items: center; gap: 2px; font-size: 11.5px; font-weight: 600; letter-spacing: .6px; white-space: nowrap; }
.category .add { margin-left: auto; color: #b9bbbe; }
.category-voice { margin-top: 17px; }
.channel { height: 32px; margin: 0 8px; padding: 0 8px; border-radius: 4px; display: flex; align-items: center; gap: 6px; color: #8e9297; letter-spacing: -.55px; }
.channel > svg:first-child { color: #72767d; }
.channel-current { background: #393c43; color: #fff; }
.channel span { flex: 1; }
.channel .act { color: #b9bbbe; }
.user { height: 53px; margin-top: auto; padding: 0 14px 1px 8px; background: #292b2f; display: flex; align-items: center; gap: 12px; color: #b9bbbe; }
.user-name { width: 78px; margin: 3px 4px 0 -4px; display: flex; flex-direction: column; font-size: 12px; letter-spacing: -.1px; line-height: 16px; white-space: nowrap; }
.user-name strong { font-size: 13px; font-weight: 600; letter-spacing: -.3px; color: #fff; }

.avatar { width: 40px; height: 40px; border-radius: 50%; position: relative; flex: none; background: #5865f2; color: #fff; display: flex; align-items: center; justify-content: center; }
.avatar-32 { width: 32px; height: 32px; }
.avatar-orange { background: #faa61a; }
.status { position: absolute; right: -3px; bottom: -3px; width: 16px; height: 16px; border: 3px solid #2f3136; border-radius: 50%; background: #3ba55c; }
.user .status { border-color: #292b2f; }

.main { flex: 1; display: flex; flex-direction: column; }
.chat-header { height: 49px; padding: 0 16px; border-bottom: 2px solid #2d3035; display: flex; align-items: center; gap: 16px; }
.chat-header .hash { color: #72767d; }
.chat-header h1 { flex: 1; margin-left: -8px; color: #fff; font-size: 15.3px; font-weight: 600; letter-spacing: -.15px; }
.chat-header .on { color: #fff; }
.search { width: 144px; height: 24px; padding: 0 6px; border-radius: 4px; background: #202225; display: flex; align-items: center; justify-content: space-between; font-size: 13px; letter-spacing: -.35px; color: #8b8e94; }

.content { flex: 1; display: flex; }
.chat { width: 2008px; display: flex; flex-direction: column; }
.messages { height: 1181px; padding: 0 14px 0 16px; border-right: 12px solid #2f3136; display: flex; flex-direction: column; }
.welcome { height: 923px; border-bottom: 1px solid #44474e; display: flex; flex-direction: column; justify-content: flex-end; align-items: center; text-align: center; padding: 0 2px 15px 0; }
.welcome h2 { font-size: 31px; line-height: 40px; font-weight: 700; letter-spacing: 0; color: #fff; }
.welcome p { font-size: 13px; letter-spacing: -.31px; line-height: 20px; margin-top: 7px; color: #a5a8ac; }
.join { height: 71px; padding: 0 11px 4px; display: flex; align-items: center; color: #8e9297; }
.join > span { margin: 0 5px 0 27px; white-space: nowrap; }
.join b { font-weight: 500; letter-spacing: -.62px; color: #fff; }
time { font-size: 12px; letter-spacing: .12px; color: #72767d; }
.day { display: flex; align-items: center; gap: 5px; height: 1px; color: #72767d; font-size: 11.5px; font-weight: 600; letter-spacing: -.3px; }
.day::before, .day::after { content: ""; flex: 1; height: 1px; background: #44474e; }
.message { display: flex; gap: 16px; margin-top: 21px; color: #dcddde; line-height: 22px; }
.message-body { margin-top: -2px; }
.message + .message { margin-top: 23px; }
.message h3 { display: flex; align-items: center; font-size: 15px; font-weight: 500; color: #fff; height: 22px; }
.message time { margin-left: 8px; padding-top: 1px; font-weight: 400; }
.message .next { margin-top: 4px; }
.bot { width: 28px; height: 15px; margin-left: 5px; border-radius: 3px; background: #5865f2; color: #fff; font-size: 9.5px; letter-spacing: -.1px; line-height: 15px; text-align: center; font-weight: 500; }
.message .bot { margin-bottom: 3px; }
.composer { width: 1976px; height: 44px; margin: -8px 0 0 16px; padding: 0 12px 0 16px; border-radius: 8px; background: #40444b; display: flex; align-items: center; }
.placeholder { flex: 1; margin-left: 16px; color: #6d7178; }
.gif { width: 24px; height: 20px; margin: 0 16px; border-radius: 3px; background: #b9bbbe; color: #40444b; font-size: 11.5px; letter-spacing: -.1px; line-height: 20px; font-weight: 800; text-align: center; }
.emoji { margin-left: 16px; }

.members { flex: 1; background: #2f3136; padding-left: 16px; }
.members h4 { padding-top: 24px; height: 40px; font-size: 11.5px; line-height: 16px; font-weight: 600; letter-spacing: .25px; color: #8e9297; }
.member { height: 44px; display: flex; align-items: center; color: #8e9297; white-space: nowrap; }
.member span { margin-left: 12px; }
.crown { margin-left: 5px; }
.member-offline > * { opacity: .4; }

/* desktop panel */
.panel { height: 41px; background: #2d2d2d; border-top: 1px solid #1f1f1f; display: flex; align-items: center; padding: 0 6px 0 5px; }
.launcher + .launcher { margin: 0 13px 0 14px; }
.task { width: 40px; height: 40px; margin-right: 6px; border-bottom: 2px solid #8ab06b; }
.task-focus { background: #6b6b6e; }
.tray { margin-left: auto; }
.clock { margin-left: 9px; width: 33px; font-size: 12.5px; font-weight: 700; color: #fff; }
.badge { font: bold 10px "Noto Sans", sans-serif; text-anchor: middle; fill: #222; }
.badge-light { fill: #fff; }
.prompt { font: bold 9.5px "Liberation Mono", monospace; fill: #fff; }
```
